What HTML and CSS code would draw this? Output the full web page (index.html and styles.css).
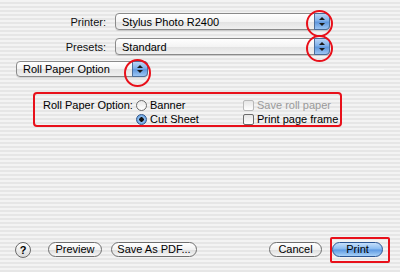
FILE: index.html
```html
<!DOCTYPE html>
<html lang="en">
<head>
  <meta charset="UTF-8" />
  <title>Print</title>
  <link rel="stylesheet" href="styles.css">
</head>
<body>
  <div class="sheet">
    <div class="top-grid">
      <label class="field-label">Printer:</label>
      <div class="popup wide">
        <span class="popup-text">Stylus Photo R2400</span>
        <span class="stepper"></span>
      </div>

      <label class="field-label">Presets:</label>
      <div class="popup wide">
        <span class="popup-text">Standard</span>
        <span class="stepper"></span>
      </div>
    </div>

    <div class="pane-row">
      <div class="popup pane">
        <span class="popup-text">Roll Paper Option</span>
        <span class="stepper"></span>
      </div>
      <div class="separator"></div>
    </div>

    <div class="options-box">
      <div class="options-label">Roll Paper Option:</div>
      <div class="radio-group">
        <div class="choice"><span class="radio"></span>Banner</div>
        <div class="choice"><span class="radio checked"></span>Cut Sheet</div>
      </div>
      <div class="check-group">
        <div class="choice disabled"><span class="checkbox"></span>Save roll paper</div>
        <div class="choice"><span class="checkbox"></span>Print page frame</div>
      </div>
    </div>

    <div class="footer">
      <span class="help">?</span>
      <button class="btn preview">Preview</button>
      <button class="btn pdf">Save As PDF...</button>
      <span class="spacer"></span>
      <button class="btn cancel">Cancel</button>
      <button class="btn default">Print</button>
    </div>
  </div>
</body>
</html>
```

FILE: styles.css
```css
* {
  box-sizing: border-box;
}

body {
  margin: 0;
  font-family: "Liberation Sans", Arial, sans-serif;
  font-size: 11px;
  color: #000;
}

.sheet {
  width: 400px;
  height: 272px;
  padding: 13px 0 15px 0;
  display: flex;
  flex-direction: column;
  background: repeating-linear-gradient(to bottom, #f3f3f3 0, #f3f3f3 2px, #e6e6e6 2px, #e6e6e6 4px);
}

.top-grid {
  display: grid;
  grid-template-columns: 106px 215px;
  column-gap: 9px;
  row-gap: 8px;
  align-items: center;
}

.field-label {
  text-align: right;
  color: #111;
}

.popup {
  position: relative;
  display: flex;
  align-items: center;
  height: 17px;
  border: 1px solid #8a8a8a;
  border-radius: 4px;
  background: linear-gradient(to bottom, #ffffff 0%, #f4f4f4 50%, #e2e2e2 51%, #f0f0f0 100%);
  box-shadow: 0 1px 0 rgba(0,0,0,0.12);
}

.popup-text {
  flex: 1;
  padding-left: 6px;
}

.stepper {
  position: relative;
  width: 16px;
  height: 17px;
  margin: -1px -1px -1px 0;
  border: 1px solid #4b6d99;
  border-radius: 0 4px 4px 0;
  background: linear-gradient(to bottom, #b9d5f5 0%, #7fb0ea 45%, #5f97dd 55%, #9cc6f4 100%);
}

.stepper::before,
.stepper::after {
  content: "";
  position: absolute;
  left: 4px;
  border-left: 3px solid transparent;
  border-right: 3px solid transparent;
}

.stepper::before {
  top: 3px;
  border-bottom: 3px solid #1a1a1a;
}

.stepper::after {
  bottom: 3px;
  border-top: 3px solid #1a1a1a;
}

/* red annotation ring round each stepper */
.popup::after {
  content: "";
  position: absolute;
  right: -4px;
  top: -4px;
  width: 23px;
  height: 23px;
  border: 2px solid #e8101a;
  border-radius: 50%;
  pointer-events: none;
}

.pane-row {
  display: flex;
  align-items: center;
  margin-top: 6px;
}

.popup.pane {
  width: 132px;
  height: 16px;
  margin-left: 16px;
}

.pane .stepper {
  height: 16px;
}

.pane::after {
  top: -3px;
  height: 24px;
}

.separator {
  flex: none;
  width: 233px;
  margin-left: 3px;
  height: 1px;
  background: #a8a8a8;
  border-bottom: 1px solid #fafafa;
}

.options-box {
  display: flex;
  width: 309px;
  height: 35px;
  margin: 15px 0 0 33px;
  padding: 4px 0 0 8px;
  border: 2px solid #e8101a;
  border-radius: 4px;
}

.options-label {
  width: 93px;
  padding-top: 1px;
}

.radio-group {
  width: 107px;
}

.choice {
  display: flex;
  align-items: center;
  height: 14px;
}

.radio {
  width: 11px;
  height: 11px;
  margin-right: 3px;
  border: 1px solid #6b6b6b;
  border-radius: 50%;
  background: linear-gradient(to bottom, #e8e8e8, #ffffff);
}

.radio.checked {
  border-color: #34588a;
  background: radial-gradient(circle, #111 0, #111 2px, #8fc0f0 2.5px, #4f8bd5 100%);
}

.checkbox {
  width: 11px;
  height: 11px;
  margin-right: 3px;
  border: 1px solid #6b6b6b;
  border-radius: 2px;
  background: linear-gradient(to bottom, #e6e6e6, #ffffff);
}

.choice.disabled {
  color: #9a9a9a;
}

.choice.disabled .checkbox {
  border-color: #b8b8b8;
}

.footer {
  margin-top: auto;
  display: flex;
  align-items: center;
  height: 15px;
  padding: 0 17px 0 15px;
}

.help {
  width: 16px;
  height: 16px;
  margin-right: 17px;
  border: 1px solid #6b6b6b;
  border-radius: 50%;
  background: linear-gradient(to bottom, #ffffff, #dadada);
  font-weight: bold;
  line-height: 14px;
  text-align: center;
}

.btn {
  height: 15px;
  padding: 0;
  border: 1px solid #6f6f6f;
  border-radius: 8px;
  background: linear-gradient(to bottom, #ffffff 0%, #f2f2f2 50%, #dddddd 51%, #f6f6f6 100%);
  font-family: inherit;
  font-size: 11px;
  line-height: 13px;
  color: #000;
}

.preview {
  width: 54px;
  margin-right: 9px;
}

.pdf {
  width: 86px;
}

.spacer {
  flex: 1;
}

.cancel {
  width: 53px;
  margin-right: 10px;
}

.btn.default {
  position: relative;
  width: 51px;
  border-color: #2b5694;
  background: linear-gradient(to bottom, #c6e0fb 0%, #86b9f0 48%, #5b98e2 52%, #a8d1f8 100%);
}

/* red annotation frame round the default button */
.btn.default::after {
  content: "";
  position: absolute;
  left: -3px;
  top: -6px;
  width: 56px;
  height: 22px;
  border: 2px solid #e8101a;
  border-radius: 2px;
}
```
